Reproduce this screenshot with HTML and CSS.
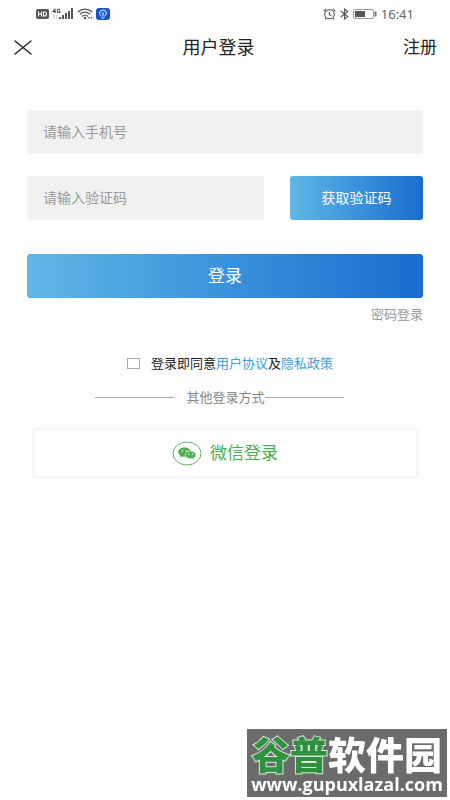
FILE: index.html
```html
<!DOCTYPE html>
<html lang="zh-CN">
<head>
<meta charset="utf-8">
<meta name="viewport" content="width=device-width, initial-scale=1">
<title>用户登录</title>
<link rel="stylesheet" href="styles.css">
</head>
<body>
<div class="status">
  <div class="status-group">
    <svg width="13" height="10" viewBox="0 0 13 10"><rect width="13" height="10" rx="2" fill="#555"/><path d="M2.5 2.5v5M5.5 2.5v5M2.5 5h3M7.5 3v4h1q2 0 2-2t-2-2z" fill="none" stroke="#fff" stroke-width="1.1"/></svg>
    <svg width="22" height="12" viewBox="0 0 22 12"><g fill="none" stroke="#444" stroke-width="1"><path d="M3 5V.8L.6 3.5H4M8 1.3H5.4V4.500H8V3H6.800"/></g><path d="M2 7v4M1 8l1-1M4.500 7v4" stroke="#ccc" fill="none"/><g fill="#555"><rect x="7" y="9" width="2" height="2"/><rect x="10" y="7" width="2" height="4"/><rect x="13" y="5" width="2" height="6"/><rect x="16" y="3" width="2" height="8"/><rect x="19" y="0" width="2" height="11"/></g></svg>
    <svg width="16" height="12" viewBox="0 0 16 12"><g fill="none" stroke="#555" stroke-width="1.2"><path d="M.7 4Q8-1.800 15.300 4M2.800 6.300Q8 2 13.200 6.300M5 8.500Q8 6 11 8.500"/></g><circle cx="8" cy="10" r="1.200" fill="#444"/><path d="M11 10.500l1-2 1 2zM13.500 9h2l-1 2z" fill="#444"/></svg>
    <svg width="14" height="12" viewBox="0 0 14 12"><rect width="14" height="12" rx="3" fill="#1556cc"/><path d="M5.800 8.300Q3.500 7 3.500 5 3.800 2 7 2t3.500 3Q10.500 7 8.200 8.300M5.500 10h3M7 8.500V5.500M5.700 4.500L7 5.500l1.300-1" fill="none" stroke="#fff" stroke-width=".9"/></svg>
  </div>
  <div class="status-group status-right">
    <svg width="13" height="12" viewBox="0 0 13 12"><g fill="none" stroke="#555" stroke-width="1.100"><ellipse cx="6.500" cy="6.300" rx="4.800" ry="4.500"/><path d="M.6 3.300L3.200.8M12.400 3.300L9.800.8M6.300 4v2.500l2 1.200M3 10l-1 1.500M10 10l1 1.500"/></g></svg>
    <svg width="9" height="12" viewBox="0 0 9 12"><path d="M.7 3l7 5.500L4.500 11V1l3.200 2.500-7 5.500" fill="none" stroke="#555" stroke-width="1.100"/></svg>
    <svg width="24" height="10" viewBox="0 0 24 10"><rect x=".5" y=".5" width="20" height="9" rx="1.500" fill="#fff" stroke="#999"/><rect x="2" y="2" width="10" height="6" fill="#555"/><path d="M22.500 2.500v5" stroke="#777" stroke-width="2"/></svg>
    <span>16:41</span>
  </div>
</div>
<header class="header">
  <button class="close" type="button" aria-label="关闭"><svg width="18" height="15" viewBox="0 0 18 15"><path d="M1 1l16 13M17 1L1 14" stroke="#222" stroke-width="1.400" fill="none" stroke-linecap="round"/></svg></button>
  <h1 class="title">用户登录</h1>
  <a class="register" href="#">注册</a>
</header>
<main class="main">
  <form class="form">
    <input class="field" type="tel" placeholder="请输入手机号" aria-label="手机号">
    <div class="code-row">
      <input class="field" type="text" placeholder="请输入验证码" aria-label="验证码">
      <button class="primary code" type="button">获取验证码</button>
    </div>
    <button class="primary login" type="submit">登录</button>
    <a class="password" href="#">密码登录</a>
    <div class="agreement">
      <input class="check" type="checkbox" id="agree">
      <div><label for="agree">登录即同意</label><a href="#">用户协议</a>及<a href="#">隐私政策</a></div>
    </div>
  </form>
  <div class="divider"><span>其他登录方式</span></div>
  <button class="wechat" type="button">
    <svg width="30" height="25" viewBox="0 0 30 25"><ellipse cx="15" cy="12.500" rx="14" ry="11.500" fill="none" stroke="#63b668"/><path d="M12.500 6.500c-3.600 0-6.300 2-6.300 4.600 0 1.500.9 2.800 2.300 3.600l-.6 1.800 2.400-1.100c.7.200 1.400.3 2.200.3 3.600 0 6.300-2 6.300-4.600s-2.700-4.600-6.300-4.600z" fill="#4caf50"/><path d="M18.600 10.100c-3 0-5.300 1.700-5.300 3.800s2.300 3.800 5.300 3.800c.7 0 1.300-.1 1.900-.3l2 1-.5-1.600c1.200-.7 1.900-1.700 1.900-2.900 0-2.100-2.300-3.800-5.300-3.800z" fill="#4caf50" stroke="#fff" stroke-width=".6"/><g fill="#fff"><circle cx="10.300" cy="9.800" r=".8"/><circle cx="14.600" cy="9.800" r=".8"/><circle cx="16.900" cy="13" r=".7"/><circle cx="20.500" cy="13" r=".7"/></g></svg>
    <span>微信登录</span>
  </button>
</main>
<aside class="watermark">
  <div class="mark-name"><span class="mark-green">谷普</span>软件园</div>
  <div class="mark-url">www.gupuxlazal.com</div>
</aside>
</body>
</html>
```
FILE: styles.css
```css
* {
  box-sizing: border-box;
}

body {
  margin: 0;
  min-height: 100vh;
  background: #fefefe;
  color: #222;
  font-family: "Noto Sans", "Noto Sans CJK SC", sans-serif;
  font-size: 13px;
  line-height: 20px;
}

svg {
  display: block;
  flex: none;
}

a {
  color: #3f9fd8;
  text-decoration: none;
}

button,
input {
  font: inherit;
  border: 0;
  margin: 0;
}

button {
  padding: 0;
  cursor: pointer;
}

.status {
  display: flex;
  justify-content: space-between;
  align-items: center;
  height: 28px;
  padding: 0 36px;
}

.status-group {
  display: flex;
  align-items: center;
  gap: 4px;
}

.status-group:first-child {
  gap: 3px;
}

.status-right {
  color: #666;
}

.header {
  display: grid;
  grid-template-columns: 1fr auto 1fr;
  align-items: center;
  height: 38px;
  padding: 0 13px 0 14px;
}

.close {
  justify-self: start;
  background: none;
}

.title {
  margin: 0;
  padding-right: 14px;
  font-size: 18px;
  font-weight: 400;
}

.register {
  justify-self: end;
  color: #222;
  font-size: 17px;
}

.main {
  padding: 44px 27px 0;
}

.form {
  display: flex;
  flex-direction: column;
}

.field {
  width: 100%;
  min-width: 0;
  height: 44px;
  padding: 0 16px 2px;
  border-radius: 3px;
  background: #f1f1f1;
  font-size: 14px;
}

.field::placeholder {
  color: #999;
  opacity: 1;
}

.code-row {
  display: grid;
  grid-template-columns: 16fr 9fr;
  gap: 26px;
  margin: 22px 0 34px;
}

.primary {
  height: 44px;
  border-radius: 3px;
  background: linear-gradient(90deg, #5fb8e6, #3b92db 50%, #1a6dcf);
  color: #fff;
}

.code {
  font-size: 14px;
}

.login {
  font-size: 17px;
}

.password {
  align-self: flex-end;
  margin-top: 6px;
  color: #999;
}

.agreement {
  display: flex;
  justify-content: center;
  align-items: center;
  gap: 11px;
  margin-top: 29px;
  padding-left: 10px;
}

.check {
  appearance: none;
  width: 13px;
  height: 11px;
  border: 1px solid #aaa;
  background: #fff;
}

.check:checked {
  background: #3f9fd8;
}

.divider {
  display: flex;
  justify-content: center;
  align-items: center;
  margin: 14px 11px 22px 0;
  color: #888;
}

.divider::before,
.divider::after {
  content: "";
  width: 79px;
  height: 1px;
  background: #aaa;
}

.divider::before {
  margin-right: 12px;
}

.wechat {
  display: flex;
  justify-content: center;
  align-items: center;
  gap: 8px;
  width: calc(100% - 12px);
  height: 48px;
  margin: 0 6px;
  border: 1px solid #f3f3f3;
  border-radius: 2px;
  background: #fff;
  box-shadow: 0 0 3px 1px #f6f6f6;
  color: #4caf50;
  font-size: 17px;
}

.watermark {
  position: fixed;
  right: 3px;
  bottom: 3px;
  width: 200px;
  height: 68px;
  background: #6b6b6b;
  color: #fff;
  font-weight: 700;
  text-align: center;
  white-space: nowrap;
}

.mark-name {
  padding-top: 3px;
  font-family: "Noto Sans CJK SC", sans-serif;
  font-size: 38px;
  font-weight: 900;
  line-height: 42px;
}

.mark-green {
  color: #2f9140;
  paint-order: stroke fill;
  -webkit-text-stroke: 2px #d9e6da;
}

.mark-url {
  font-family: "Open Sans", sans-serif;
  font-size: 18px;
  line-height: 20px;
}
```
